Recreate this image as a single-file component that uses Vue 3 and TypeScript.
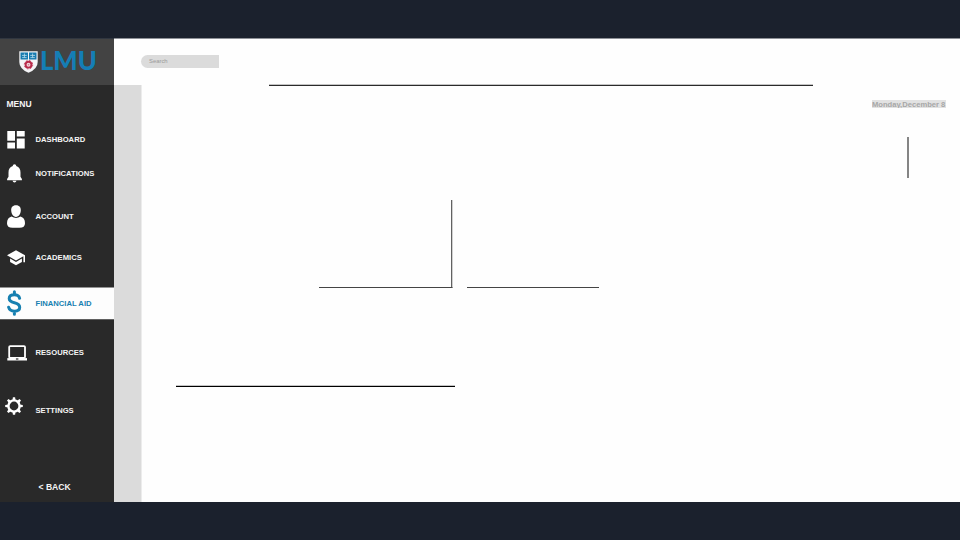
<script setup lang="ts">
type IconName = 'dashboard' | 'bell' | 'person' | 'academics' | 'dollar' | 'laptop' | 'gear'

interface NavItem {
  label: string
  icon: IconName
}

const items: NavItem[] = [
  { label: 'DASHBOARD', icon: 'dashboard' },
  { label: 'NOTIFICATIONS', icon: 'bell' },
  { label: 'ACCOUNT', icon: 'person' },
  { label: 'ACADEMICS', icon: 'academics' },
  { label: 'FINANCIAL AID', icon: 'dollar' },
  { label: 'RESOURCES', icon: 'laptop' },
  { label: 'SETTINGS', icon: 'gear' },
]
const active: IconName = 'dollar'
const teeth: number[] = [0, 45, 90, 135, 180, 225, 270, 315]
</script>

<template>
  <div class="screen">
    <div class="window">
      <aside class="sidebar">
        <div class="brand">
          <svg class="crest" viewBox="0 0 19 22">
            <path d="M0.3 0.3H18.700V11Q18.700 18 9.500 21.800Q0.300 18 0.300 11Z" fill="#f4f4f6" />
            <path d="M1.500 1.500H9V8.600H1.500ZM10 1.500H17.500V8.600H10Z" fill="#177bb0" />
            <path d="M3 4.400H7.800M5.400 2.500V6.500M3.200 6.600H7.600M11.200 4.400H16M13.600 2.500V6.500M11.400 6.600H15.800" stroke="#b9deee" stroke-width=".8" />
            <circle cx="9.500" cy="13.700" r="2.900" fill="#f2d5dc" stroke="#b92b4b" stroke-width="1.900" />
            <circle cx="9.500" cy="13.700" r="4.200" fill="none" stroke="#b92b4b" stroke-width=".9" stroke-dasharray="1.700 1.600" />
            <circle cx="9.500" cy="13.700" r=".8" fill="#d77389" />
          </svg>
          <span class="wordmark">LMU</span>
        </div>
        <h2 class="menu-title">MENU</h2>
        <nav>
          <a v-for="item in items" :key="item.icon" :class="['item', item.icon, { active: item.icon === active }]">
            <span class="icon">
              <svg v-if="item.icon === 'dashboard'" width="18" height="18" viewBox="0 0 18 18" fill="currentColor">
                <path d="M.3 0H8V9.800H.3ZM9.800 0H17.700V5.600H9.800ZM.3 11.600H8V17.400H.3ZM9.800 7.500H17.700V17.400H9.800Z" />
              </svg>
              <svg v-else-if="item.icon === 'bell'" width="15" height="19" viewBox="0 0 15 19" fill="currentColor">
                <path d="M7.500 .3C8.600 .3 9.200 1 9.200 2.100C12.300 3 13.500 5.500 13.500 8.500V12.800L14.900 15V16.300H.1V15L1.500 12.800V8.500C1.500 5.500 2.700 3 5.800 2.100C5.800 1 6.400 .3 7.500 .3ZM5.500 16.800H9.500Q9 18.600 7.500 18.600Q6 18.600 5.500 16.800Z" />
              </svg>
              <svg v-else-if="item.icon === 'person'" width="18" height="23" viewBox="0 0 18 23" fill="currentColor">
                <path d="M9 .2C12.600 .2 14 2.600 13.800 5.600C13.600 9.100 11.800 11.900 9 11.900S4.400 9.100 4.200 5.600C4 2.600 5.400 .2 9 .2Z" />
                <path d="M4.500 11.600Q9 14.200 13.500 11.600C16.500 12.500 18 14.700 18 18.200Q18 22.800 12.500 22.800H5.500Q0 22.800 0 18.200C0 14.700 1.500 12.500 4.500 11.600Z" />
              </svg>
              <svg v-else-if="item.icon === 'academics'" width="18" height="16" viewBox="0 0 18 16" fill="currentColor">
                <path d="M9 .3L18 5.300V12.300H16.400V6.300L9 10.400L0 5.300ZM3.100 8.600L9 11.900L14.900 8.600V11.900L9 15.300L3.100 11.900Z" />
              </svg>
              <svg v-else-if="item.icon === 'dollar'" width="15" height="26" viewBox="0 0 15 26" fill="none" stroke="currentColor" stroke-width="3">
                <path d="M12.600 8.300C12 5.800 10.400 4.800 7.400 4.800C4.200 4.800 2.200 6.200 2.200 8.500C2.200 11.200 4.300 12 7.400 12.700C10.800 13.500 12.700 14.700 12.700 17.300C12.700 19.900 10.600 21.200 7.600 21.200C4.300 21.200 2.300 19.900 1.600 17.200M7.400 1.800V4.500M7.400 21.500V24.200" stroke-linecap="round" />
              </svg>
              <svg v-else-if="item.icon === 'laptop'" width="20" height="16" viewBox="0 0 20 16" fill="none" stroke="currentColor">
                <rect x="2.200" y="1.100" width="15.800" height="11.900" rx="1" stroke-width="1.800" />
                <path d="M.3 14.300H20" stroke-width="2.400" />
                <path d="M8.900 14H11.400" stroke="#292929" stroke-width="1.200" />
              </svg>
              <svg v-else width="18" height="18" viewBox="0 0 18 18" fill="none" stroke="currentColor">
                <circle cx="9" cy="9" r="5.600" stroke-width="2.400" />
                <path v-for="angle in teeth" :key="angle" d="M7.400 3.500L7.900 .2H10.100L10.600 3.500Z" fill="currentColor" stroke="none" :transform="`rotate(${angle} 9 9)`" />
              </svg>
            </span>
            <span>{{ item.label }}</span>
          </a>
        </nav>
        <a class="back">&lt; BACK</a>
      </aside>
      <div class="gutter"></div>
      <main class="content">
        <div class="search">Search</div>
        <div class="rule header-rule"></div>
        <div class="date"><span>Monday,December 8</span></div>
        <div class="side-rule"></div>
        <div class="columns">
          <div class="column first"></div>
          <div class="column second"></div>
        </div>
        <div class="rule section-rule"></div>
      </main>
    </div>
  </div>
</template>

<style>
body {
  margin: 0;
  background: #1b212d;
}
</style>

<style scoped>
.screen {
  box-sizing: border-box;
  width: 960px;
  height: 540px;
  padding: 38px 0;
  overflow: hidden;
  background: #1b212d;
  font-family: "Liberation Sans", Arial, sans-serif;
}
.window {
  box-sizing: border-box;
  display: flex;
  height: 464px;
  padding-top: 1px;
  background: linear-gradient(to right, #303640 113.700px, #8e9197 113.700px) top / 100% 1px no-repeat #fefefe;
}
.sidebar {
  flex: none;
  width: 113.700px;
  background: #292929;
  color: #f5f5f5;
  font-weight: bold;
}
.brand {
  box-sizing: border-box;
  display: flex;
  height: 46px;
  padding: 11.500px 0 0 19px;
  background: #434343;
}
.crest {
  flex: none;
  width: 19px;
  height: 22px;
}
.wordmark {
  margin: -3.500px 0 0 2px;
  color: #147eb5;
  font: 900 26.500px/27px Lato, sans-serif;
  transform: scaleX(.965);
  transform-origin: left;
}
.menu-title {
  height: 12px;
  margin: 13px 0 0 6.500px;
  font-size: 8.500px;
  line-height: 12px;
}
nav {
  padding-top: 13px;
}
.item {
  display: flex;
  align-items: center;
  height: 32px;
  font-size: 7.650px;
  white-space: nowrap;
}
.icon {
  display: flex;
  flex: none;
  width: 28.500px;
  padding-left: 7px;
  color: #fff;
}
.dashboard .icon,
.academics .icon,
.laptop .icon {
  padding-top: 2px;
}
.bell {
  margin-top: 2px;
}
.person {
  margin-top: 11px;
}
.academics {
  margin-top: 9px;
}
.dollar {
  height: 32px;
  margin-top: 14px;
}
.laptop {
  margin-top: 17px;
}
.gear {
  margin-top: 26px;
}
.gear .icon {
  width: 30.500px;
  padding-left: 5px;
  margin-top: -9px;
}
.active,
.active .icon {
  color: #1780b1;
}
.active {
  background: linear-gradient(#939393 1px, #fdfdfd 1px);
  box-shadow: 0 1px #606060;
}
.back {
  display: block;
  margin: 55px 0 0 38.500px;
  font-size: 8.600px;
  line-height: 12px;
}
.gutter {
  flex: none;
  width: 27.300px;
  margin-top: 46px;
  background: #dbdbdb;
  border-right: 1px solid #ececec;
}
.content {
  flex: 1;
  margin-left: -1px;
}
.search {
  box-sizing: border-box;
  width: 78px;
  height: 13px;
  margin-top: 16px;
  padding-left: 8px;
  border-radius: 6.500px 0 0 6.500px;
  background: #dbdbdb;
  color: #9a9a9a;
  font-size: 5.900px;
  line-height: 13px;
}
.rule {
  height: 1px;
  border-top: 1px solid #c4c4c4;
  background: #2b2b2b;
}
.header-rule {
  width: 544px;
  margin: 16px 0 0 128px;
}
.date {
  display: flex;
  justify-content: flex-end;
  margin: 14px 14px 0 0;
}
.date span {
  width: 74px;
  height: 8px;
  overflow: hidden;
  background: #e2e2e2;
  color: #a7a7a7;
  font-size: 7.600px;
  font-weight: bold;
  line-height: 9px;
  white-space: nowrap;
}
.side-rule {
  width: 2px;
  height: 41px;
  margin: 29px 51px 0 auto;
  background: #858585;
}
.columns {
  display: flex;
  gap: 14px;
  margin: 22px 0 0 178px;
}
.column {
  box-sizing: border-box;
  width: 132px;
  height: 88px;
  border-bottom: 1px solid #444;
}
.first {
  width: 134px;
  border-right: 1px solid #d0d0d0;
  box-shadow: inset -1px 0 #626262;
}
.section-rule {
  width: 279px;
  margin: 97px 0 0 34.700px;
  background: #000;
}
</style>
